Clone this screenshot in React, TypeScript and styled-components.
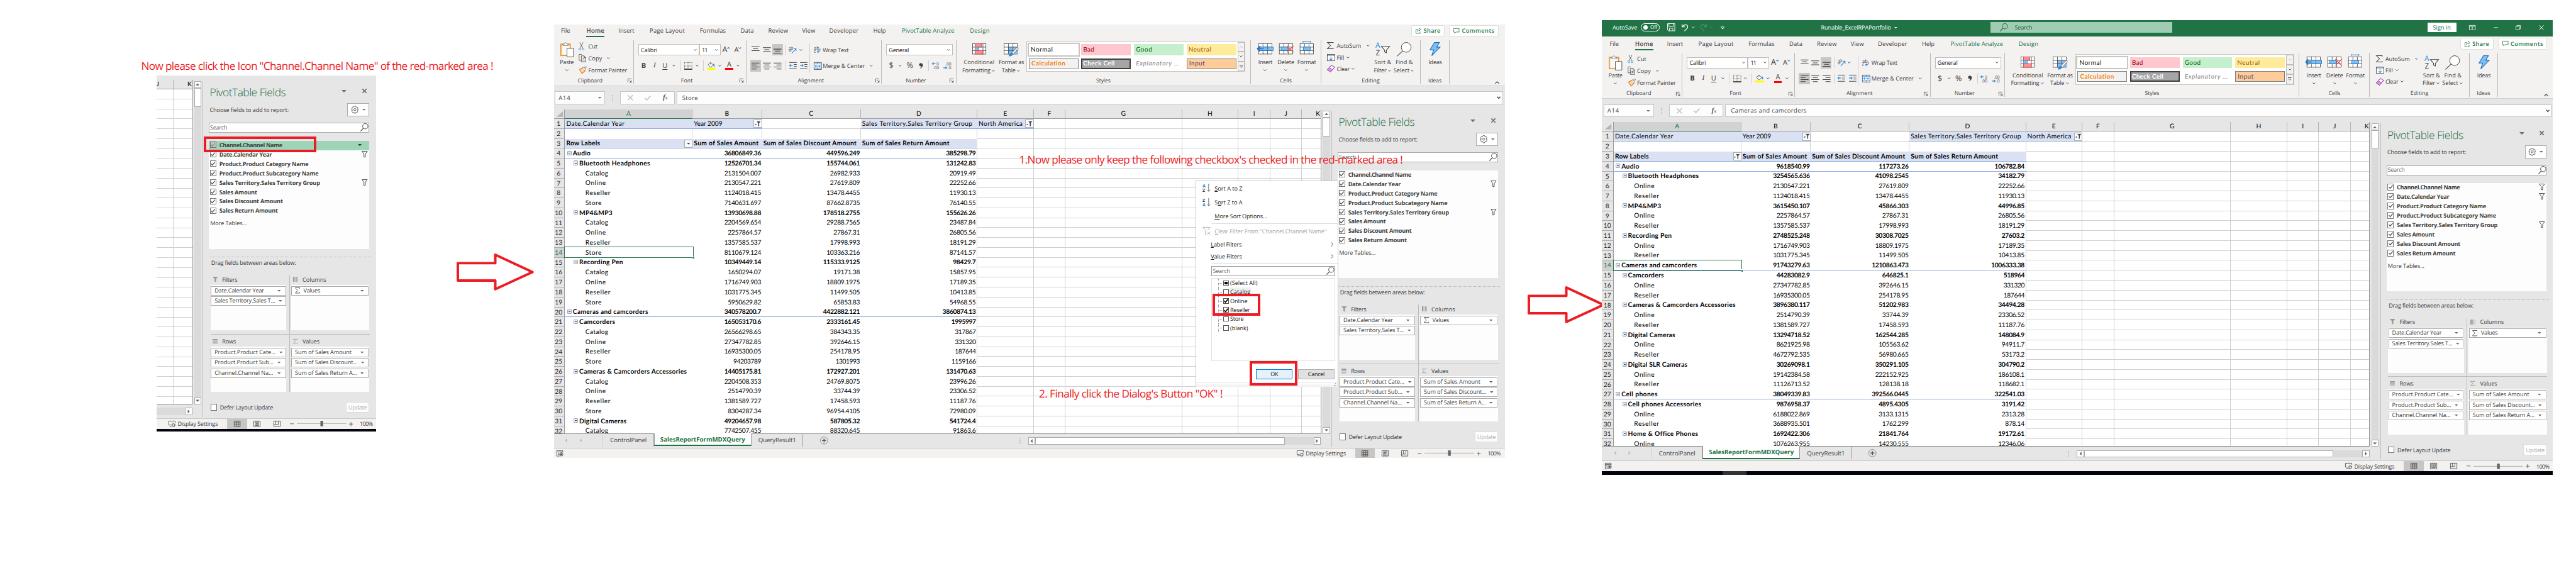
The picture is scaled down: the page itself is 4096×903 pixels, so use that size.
import React, { useLayoutEffect, useRef } from "react";
import styled, { createGlobalStyle, css } from "styled-components";

/* 1rem is ten design pixels of the 5192px wide board. */
const UNIT = 0.78891;
const r = (n: number) => `${n / 10}rem`;

const GREEN = "#217346";
const RED = "#ed1c24";
const CHROME = "#e6e6e6";
const PANEL = "#f3f2f1";
const INK = "#404040";
const BLUE = "#2b88d8";

const GlobalStyle = createGlobalStyle`
  html { font-size: ${UNIT * 10}px; }
  body { margin: 0; background: #fff; overflow: hidden; }
  *, *::before, *::after { box-sizing: border-box; }
  #root {
    font-family: "Open Sans", "Noto Sans", sans-serif;
    font-size: 1.16rem;
    color: ${INK};
    text-rendering: geometricPrecision;
  }
`;

/* ---------- text that is tracked to a given width ---------- */
const Tracked = styled.span`
  display: inline-block;
  white-space: pre;
`;

function T({ w, children }: { w: number; children: React.ReactNode }) {
  const ref = useRef<HTMLSpanElement>(null);
  useLayoutEffect(() => {
    const el = ref.current;
    if (!el) return;
    el.style.letterSpacing = "0px";
    const natural = el.getBoundingClientRect().width;
    const count = (el.textContent || "x").length;
    el.style.letterSpacing = `${(w * UNIT - natural) / count}px`;
  }, [w, children]);
  return <Tracked ref={ref}>{children}</Tracked>;
}

/* ---------- icons ---------- */
const Svg = styled.svg<{ $w: number; $h: number }>`
  display: block;
  flex: none;
  width: ${(p) => r(p.$w)};
  height: ${(p) => r(p.$h)};
  fill: none;
  stroke: ${INK};
  overflow: visible;
`;

type IconProps = { w: number; h: number; color?: string; children: React.ReactNode };
const Icon = ({ w, h, color, children }: IconProps) => (
  <Svg $w={w} $h={h} viewBox={`0 0 ${w} ${h}`} style={color ? { stroke: color } : undefined}>
    {children}
  </Svg>
);

const InlineCaret = styled.span<{ $gap?: number }>`
  display: inline-block;
  vertical-align: middle;
  margin: 0 ${r(2)} 0 ${(p) => r(p.$gap ?? 3)};
`;
const Caret = ({ color }: { color?: string }) => (
  <Icon w={6} h={4} color={color}><path d="M0.5 0.5L3 3L5.5 0.5" strokeWidth="1.2" /></Icon>
);
const TextCaret = ({ gap }: { gap?: number }) => <InlineCaret $gap={gap}><Caret /></InlineCaret>;
const Down = ({ w = 8, color = "#6a6a6a" }: { w?: number; color?: string }) => (
  <Icon w={w} h={w / 2} color="none"><path d={`M0 0H${w}L${w / 2} ${w / 2}Z`} fill={color} stroke="none" /></Icon>
);
const PasteIcon = () => (
  <Icon w={27} h={30}>
    <rect x="1" y="4" width="19" height="23" stroke="#e8912d" strokeWidth="2" fill="#fbe3c0" />
    <rect x="3.5" y="7" width="14" height="18" fill="#fafafa" stroke="none" />
    <path d="M5 7V4H8Q8 1 10.5 1T13 4H16V7Z" fill="#fff" stroke="#777" />
    <rect x="13.5" y="12.5" width="13" height="17" fill="#fff" stroke="#333" />
  </Icon>
);
const CutIcon = () => (
  <Icon w={12} h={17}>
    <path d="M2.5 0.5L8.5 12M9 0.5L3 12" />
    <circle cx="2.5" cy="14" r="2" stroke={BLUE} /><circle cx="9" cy="14" r="2" stroke={BLUE} />
  </Icon>
);
const CopyIcon = () => (
  <Icon w={15} h={16}>
    <path d="M6 12.5H1V0.5H6.5M5.5 3.5H11L14.5 7V15.5H5.5ZM11 3.5V7H14.5M8 9.5H12M8 12H12" />
  </Icon>
);
const PainterIcon = () => (
  <Icon w={17} h={16}>
    <path d="M2 7L8 3.5L13 9.5L7 15Z" fill="#fbd9a9" stroke="#e07b1a" strokeWidth="1.5" />
    <path d="M8 4L10.5 2L14 6.5L12 8.5M11.5 3L14.5 0.5L16 2L13.5 5" fill="#fff" stroke="#555" />
  </Icon>
);
const LauncherIcon = () => (
  <Icon w={8} h={8}><path d="M0.5 7.5V0.5H7.5M3 3L7 7M7.5 3.5V7.5H3.5" /></Icon>
);
const BordersIcon = () => (
  <Icon w={16} h={15}>
    <path d="M0.5 0.5H15.5M0.5 7.5H15.5M0.5 0V14M7.5 0V14M15.5 0V14" strokeDasharray="1.2 1.2" />
    <path d="M0 14H16" strokeWidth="2" stroke="#222" />
  </Icon>
);
const FillIcon = () => (
  <Icon w={17} h={17}>
    <path d="M2.5 6L7.5 1.5L13 7L7 11.5Z M7.5 1.5V6" fill="#fff" />
    <path d="M13 5Q15.5 7 14.5 10" stroke={BLUE} strokeWidth="2" />
    <rect x="0" y="12.5" width="17" height="4" fill="#ffff00" stroke="none" />
  </Icon>
);
const lines = (xs: number[][]) => xs.map(([x, y, l]) => `M${x} ${y}H${x + l}`).join("");
const AlignIcon = ({ kind }: { kind: "top" | "mid" | "bot" | "left" | "center" | "right" }) => {
  const d = {
    top: lines([[0, 1.5, 16], [3, 5.5, 10], [0, 9.5, 16]]),
    mid: lines([[0, 3.5, 16], [3, 7.5, 10], [0, 11.5, 16]]),
    bot: lines([[0, 6.5, 16], [3, 10.5, 10], [0, 14.5, 16]]),
    left: lines([[0, 1.5, 16], [0, 5.5, 10], [0, 9.5, 16], [0, 13.5, 10]]),
    center: lines([[0, 1.5, 16], [3, 5.5, 10], [0, 9.5, 16], [3, 13.5, 10]]),
    right: lines([[0, 1.5, 16], [6, 5.5, 10], [0, 9.5, 16], [6, 13.5, 10]]),
  }[kind];
  return <Icon w={16} h={15}><path d={d} strokeWidth="1.3" /></Icon>;
};
const OrientIcon = () => (
  <Icon w={17} h={16}>
    <text x="-1" y="9" transform="rotate(-45 5 7)" fontSize="10" fill={INK} stroke="none">ab</text>
    <path d="M6 15L15 6M15 10.5V5.5H10" stroke={BLUE} strokeWidth="1.3" />
  </Icon>
);
const IndentIcon = ({ out }: { out?: boolean }) => (
  <Icon w={15} h={14}>
    <path d="M0 0.5H15M9 4.5H15M9 8.5H15M0 13H15" strokeWidth="1.2" />
    <path d={out ? "M7 6.5H0.5M3 4L0.5 6.5L3 9" : "M0 6.5H6.5M4 4L6.5 6.5L4 9"} stroke={BLUE} strokeWidth="1.4" />
  </Icon>
);
const WrapIcon = () => (
  <Icon w={14} h={15}>
    <text x="0" y="7" fontSize="9.5" fill={INK} stroke="none">ab</text>
    <text x="0" y="14.5" fontSize="9.5" fill={INK} stroke="none">c</text>
    <path d="M12.5 6Q14 11.5 7 11.5M9.5 9L7 11.5L9.5 14" stroke={BLUE} strokeWidth="1.3" />
  </Icon>
);
const MergeIcon = () => (
  <Icon w={16} h={15}>
    <path d="M0.5 0.5H15.5V14.5H0.5ZM8 0.5V3.5M8 11.5V14.5" />
    <rect x="0.5" y="3.5" width="15" height="8" fill="#fff" stroke={BLUE} />
    <path d="M3 7.5H13M5 5.5L3 7.5L5 9.5M11 5.5L13 7.5L11 9.5" stroke={BLUE} strokeWidth="1.3" />
  </Icon>
);
const DecimalIcon = ({ more }: { more?: boolean }) => (
  <Icon w={17} h={16}>
    <text x={more ? 9 : 4} y="7" fontSize="8.5" fill={INK} stroke="none">{more ? "0" : ".00"}</text>
    <text x={more ? 2 : 9} y="15.5" fontSize="8.5" fill={INK} stroke="none">{more ? ".00" : ".0"}</text>
    <path d={more ? "M7 4H0.5M3 1.5L0.5 4L3 6.5" : "M0 12.5H7M4.5 10L7 12.5L4.5 15"} stroke={BLUE} strokeWidth="1.4" />
  </Icon>
);
const CondIcon = () => (
  <Icon w={28} h={22}>
    <rect x="0.5" y="0.5" width="27" height="21" fill="#fff" />
    <path d="M0 7.5H28M0 14.5H28M21.5 0V22" />
    <rect x="5.5" y="0.5" width="13" height="7" fill="#ff8f8f" stroke="#d13438" />
    <rect x="5.5" y="7.5" width="8" height="7" fill="#83bdee" stroke={BLUE} />
    <rect x="5.5" y="14.5" width="16" height="7" fill="#ff8f8f" stroke="#d13438" />
  </Icon>
);
const TableIcon = () => (
  <Icon w={30} h={27}>
    <rect x="0.5" y="0.5" width="27" height="21" fill="#fff" />
    <rect x="9" y="7" width="18.5" height="14.5" fill="#83bdee" stroke="none" />
    <path d="M0 7.5H28M0 14.5H28M9.5 0V22M18.5 0V22" />
    <path d="M28 7L16 19L19 22L29.5 10Z" fill="#fff" stroke="#555" />
    <path d="M17 18Q11 20 10 26Q17 27 19 21Z" fill={BLUE} stroke="none" />
  </Icon>
);
const CellsIcon = ({ kind }: { kind: "insert" | "delete" | "format" }) => (
  <Icon w={30} h={27}>
    <rect x="1.5" y="5.5" width="27" height="21" fill="#fff" />
    <path d="M1 12.5H29M1 19.5H29M10.5 5V27M19.5 5V27" />
    {kind === "insert" && (
      <>
        <rect x="3" y="12.5" width="28" height="7" fill="#83bdee" stroke="#0f6cbd" />
        <path d="M19.5 12V20" stroke="#0f6cbd" />
        <path d="M12 16H-1M4 10.5L-1 16L4 21.5" stroke="#0f6cbd" strokeWidth="1.6" />
      </>
    )}
    {kind === "delete" && (
      <>
        <rect x="5" y="12.5" width="14" height="7" fill="#83bdee" stroke="#0f6cbd" />
        <path d="M17 10L30 23M30 10L17 23" stroke="#f3534f" strokeWidth="1.8" />
      </>
    )}
    {kind === "format" && (
      <>
        <rect x="8" y="12.5" width="14" height="7" fill="#83bdee" stroke="#0f6cbd" />
        <path d="M7.5 0V3.5M22.5 0V3.5M7.5 1.7H22.5" stroke={BLUE} strokeWidth="1.3" />
      </>
    )}
  </Icon>
);
const SigmaIcon = ({ w = 12, h = 13, color }: { w?: number; h?: number; color?: string }) => (
  <Svg $w={w} $h={h} viewBox="0 0 12 13" preserveAspectRatio="none" style={color ? { stroke: color } : undefined}>
    <path d="M11.5 2.5V0.7H0.8L6.5 6.5L0.8 12.3H11.5V10.5" strokeWidth="1.2" />
  </Svg>
);
const FillDownIcon = () => (
  <Icon w={16} h={14}>
    <rect x="0.5" y="0.5" width="15" height="13" fill="#fff" /><path d="M0 2.5H16" />
    <path d="M8 4.5V12M5 9L8 12L11 9" stroke={BLUE} strokeWidth="1.3" />
  </Icon>
);
const EraserIcon = () => (
  <Icon w={16} h={15}>
    <path d="M9 0.7L15.3 5L7 14.3L0.7 10Z" fill="#fff" stroke="#a33fb5" strokeWidth="1.3" />
    <path d="M4.5 5.6L11 9.8L7 14.3L0.7 10Z" fill="#d59be0" stroke="#a33fb5" />
  </Icon>
);
const SortFilterIcon = () => (
  <Icon w={29} h={27}>
    <text x="0" y="12" fontSize="15" fill={BLUE} stroke="none">A</text>
    <text x="0.5" y="26" fontSize="15" fill={INK} stroke="none">Z</text>
    <path d="M12 8.5H28.5L22 16V21.5L18.5 19.5V16Z" strokeWidth="1.3" fill="#fff" />
  </Icon>
);
const FindIcon = () => (
  <Icon w={30} h={29}>
    <circle cx="19" cy="10.5" r="9.8" strokeWidth="1.2" fill="#fff" /><path d="M12 17.5L0.5 28.5" strokeWidth="1.3" />
  </Icon>
);
const BoltIcon = () => (
  <Icon w={22} h={28}><path d="M10 0.7H20L14.5 10H21.5L4.5 27.3L8.5 15.5H1Z" fill="#83bdee" stroke="#0f6cbd" strokeWidth="1.3" /></Icon>
);
const FunnelIcon = ({ solid }: { solid?: boolean }) =>
  solid ? (
    <Icon w={11} h={11}><path d="M0 0H11L7 4.5V11L4 9.5V4.5Z" fill="#9a9a9a" stroke="none" /></Icon>
  ) : (
    <Icon w={12} h={13}><path d="M0.7 0.7H11.5L7.5 6V12.3H4.7V6Z" strokeWidth="1.2" /></Icon>
  );
const LensIcon = ({ color }: { color?: string }) => (
  <Icon w={16} h={17} color={color}><circle cx="10" cy="6" r="5.4" strokeWidth="1.2" /><path d="M6 10L0.5 16" strokeWidth="1.4" /></Icon>
);
const GearIcon = () => (
  <Icon w={16} h={16}>
    <path d="M6.5 0.7H9.5L10.3 3L12.6 2.4L14.3 5L13 7L15.2 8L13 9.2L14.3 11.2L12.6 13.6L10.3 13L9.5 15.3H6.5L5.7 13L3.4 13.6L1.7 11.2L3 9.2L0.8 8L3 7L1.7 5L3.4 2.4L5.7 3Z" />
    <circle cx="8" cy="8" r="2.3" />
  </Icon>
);
const CrossIcon = ({ s = 10, color = "#555", sw = 2 }: { s?: number; color?: string; sw?: number }) => (
  <Icon w={s} h={s} color={color}><path d={`M0.5 0.5L${s - 0.5} ${s - 0.5}M${s - 0.5} 0.5L0.5 ${s - 0.5}`} strokeWidth={sw} /></Icon>
);
const CheckIcon = ({ color = "#555", sw = 1.7 }: { color?: string; sw?: number }) => (
  <Icon w={9} h={8} color={color}><path d="M0.5 4L3.3 7L8.5 0.8" strokeWidth={sw} /></Icon>
);

/* ---------- ribbon ---------- */
const Titlebar = styled.div`
  display: flex;
  align-items: center;
  height: ${r(33)};
  padding-bottom: ${r(2)};
  background: ${GREEN};
  color: #fff;
`;
const TitleItem = styled.div<{ $gap: number; $w?: number }>`
  display: flex;
  align-items: center;
  justify-content: flex-start;
  flex: none;
  margin-left: ${(p) => r(p.$gap)};
  ${(p) => p.$w && css`width: ${r(p.$w)};`}
`;
const Toggle = styled(TitleItem)`
  height: ${r(16)};
  border: 1px solid #fff;
  border-radius: ${r(8)};
  padding-left: ${r(4)};
  gap: ${r(5)};
  font-size: ${r(10.5)};
`;
const Knob = styled.span`
  width: ${r(9)};
  height: ${r(9)};
  border-radius: 50%;
  background: #fff;
`;
const SearchPill = styled(TitleItem)`
  height: ${r(22)};
  padding-left: ${r(19)};
  gap: ${r(14)};
  background: #9fcdb3;
  color: #1c5e3a;
`;
const SignIn = styled(TitleItem)`
  height: ${r(19)};
  justify-content: center;
  background: #fff;
  color: ${GREEN};
  border-radius: 1px;
`;

const TabBar = styled.div<{ $cut: boolean }>`
  display: flex;
  height: ${(p) => r(p.$cut ? 26 : 29)};
  padding-left: ${r(16.3)};
  background: ${PANEL};
`;
const Tab = styled.div<{ $lead: number; $on?: boolean; $green?: boolean }>`
  margin-left: ${(p) => r(p.$lead)};
  display: flex;
  align-items: flex-end;
  line-height: ${r(18.6)};
  font-size: ${r(12)};
  color: ${(p) => (p.$green ? GREEN : INK)};
  border-bottom: ${r(3)} solid ${(p) => (p.$on ? GREEN : "transparent")};
  height: calc(100% - ${r(1)});
  ${(p) => p.$on && css`-webkit-text-stroke: 0.3px ${INK};`}
`;
const TabTools = styled.div`
  display: flex;
  align-items: flex-end;
  margin-left: auto;
  padding: 0 ${r(13)} ${r(2.3)} 0;
  gap: ${r(9)};
`;
const TabTool = styled.div<{ $w: number }>`
  display: flex;
  align-items: center;
  gap: ${r(5)};
  width: ${(p) => r(p.$w)};
  height: ${r(23.4)};
  padding-left: ${r(7.5)};
  border: 1px solid #e1dfdd;
  border-radius: ${r(3)};
  background: #fff;
  color: ${GREEN};
  font-weight: 600;
`;

const RibbonBar = styled.div`
  display: flex;
  height: ${r(97.6)};
  padding-top: ${r(5)};
  background: ${PANEL};
  border-bottom: 1px solid #d0d0d0;
`;
const GroupBox = styled.div<{ $w: number }>`
  display: flex;
  flex-direction: column;
  flex: none;
  width: ${(p) => r(p.$w)};
  height: ${r(88)};
  border-right: 1px solid #bdbbb9;
`;
const GroupBody = styled.div`
  display: flex;
  height: ${r(78)};
`;
const GroupLabel = styled.div`
  display: flex;
  align-items: center;
  height: ${r(12)};
  line-height: ${r(12)};
  font-size: ${r(11)};
`;
const LabelText = styled.span`
  flex: 1;
  text-align: center;
`;
const Launcher = styled.span`
  width: ${r(12)};
`;
function Group(p: { w: number; label: string; lw: number; launch?: boolean; children: React.ReactNode }) {
  return (
    <GroupBox $w={p.w}>
      <GroupBody>{p.children}</GroupBody>
      <GroupLabel>
        <LabelText><T w={p.lw}>{p.label}</T></LabelText>
        {p.launch && <Launcher><LauncherIcon /></Launcher>}
      </GroupLabel>
    </GroupBox>
  );
}

const BigButton = styled.div<{ $w: number; $lead?: number }>`
  width: ${(p) => r(p.$w)};
  margin-left: ${(p) => r(p.$lead || 0)};
  flex: none;
  display: flex;
  flex-direction: column;
  align-items: center;
  line-height: ${r(16)};
  white-space: nowrap;
`;
const BigArt = styled.div<{ $top?: number }>`
  height: ${r(37)};
  padding-top: ${(p) => r(p.$top ?? 4)};
`;
const CaretLine = styled.div`
  height: ${r(15)};
  display: flex;
  align-items: center;
`;
const SmallList = styled.div<{ $lead: number; $pitch: number; $w: number }>`
  display: grid;
  grid-auto-rows: ${(p) => r(p.$pitch)};
  align-items: center;
  margin-left: ${(p) => r(p.$lead)};
  width: ${(p) => r(p.$w)};
  flex: none;
`;
const SmallButton = styled.div`
  display: grid;
  grid-template-columns: ${r(19)} auto auto;
  justify-content: start;
  align-items: center;
  white-space: nowrap;
`;
const ToolRows = styled.div<{ $lead: number }>`
  display: flex;
  flex-direction: column;
  gap: ${r(9)};
  padding: ${r(8)} 0 0 ${(p) => r(p.$lead)};
`;
const ToolRow = styled.div<{ $cols: number[] }>`
  display: grid;
  grid-template-columns: ${(p) => p.$cols.map((c) => r(c)).join(" ")};
  height: ${r(23)};
`;
const Tool = styled.div<{ $on?: boolean }>`
  display: flex;
  align-items: center;
  justify-content: center;
  background: ${(p) => (p.$on ? "#c8c6c4" : "transparent")};
`;
const Letter = styled(Tool)<{ $size?: number; $bold?: boolean; $italic?: boolean; $line?: boolean }>`
  font-size: ${(p) => r(p.$size || 14)};
  font-weight: ${(p) => (p.$bold ? 700 : 400)};
  font-style: ${(p) => (p.$italic ? "italic" : "normal")};
  font-family: ${(p) => (p.$italic ? '"Liberation Serif", serif' : "inherit")};
  text-decoration: ${(p) => (p.$line ? "underline" : "none")};
  text-underline-offset: ${r(2)};
  line-height: 1;
`;
const FontColour = styled.span`
  border-bottom: ${r(4)} solid #ff0000;
  padding: 0 ${r(3.5)};
  line-height: ${r(13)};
`;
const Divider = styled.span<{ $h?: number; $top?: number }>`
  flex: none;
  width: 1px;
  height: ${(p) => r(p.$h || 21)};
  margin-top: ${(p) => r(p.$top || 0)};
  background: #d0cecc;
`;
const Combo = styled.div`
  display: flex;
  align-items: center;
  justify-content: space-between;
  padding: 0 ${r(4)};
  background: #fff;
  border: 1px solid #c0bebc;
  color: #222;
`;
const WideTool = styled.div`
  display: grid;
  grid-template-columns: ${r(18.5)} auto auto;
  justify-content: start;
  align-items: center;
  height: ${r(23)};
  white-space: nowrap;
`;

const Gallery = styled.div`
  display: flex;
  width: ${r(441)};
  height: ${r(61.7)};
  margin-top: ${r(2.3)};
  background: #fff;
  border: 1px solid #c8c6c4;
`;
const Swatches = styled.div`
  display: grid;
  flex: 1;
  grid-template-columns: repeat(4, ${r(100)});
  grid-auto-rows: ${r(22)};
  gap: ${r(6)};
  padding: ${r(4.8)} 0 0 ${r(3)};
`;
const Swatch = styled.div<{ $bg: string; $fg: string; $kind?: string }>`
  display: flex;
  align-items: center;
  padding-left: ${r(4)};
  font-size: ${r(12.6)};
  font-family: Lato, "Open Sans", sans-serif;
  background: ${(p) => p.$bg};
  color: ${(p) => p.$fg};
  ${(p) => p.$kind === "picked" && css`box-shadow: 0 0 0 ${r(2.6)} #c8c6c4;`}
  ${(p) => p.$kind === "boxed" && css`border: 1px solid #7f7f7f;`}
  ${(p) => p.$kind === "check" && css`border: ${r(3)} double #3f3f3f; font-weight: 700; padding-left: ${r(1)};`}
  ${(p) => p.$kind === "calc" && css`border: 1px solid #7f7f7f; font-weight: 700;`}
  ${(p) => p.$kind === "note" && css`font-style: italic;`}
`;
const GalleryScroll = styled.div`
  display: grid;
  grid-template-rows: 1fr 1fr 1fr;
  width: ${r(15)};
`;
const GalleryStep = styled.div`
  display: flex;
  flex-direction: column;
  align-items: center;
  justify-content: center;
  border: 1px solid #c0bebc;
  background: ${PANEL};
`;
const Collapse = styled.div`
  margin: ${r(82)} ${r(11)} 0 auto;
`;

const TABS: [string, number, number, string?][] = [
  ["File", 0, 18.6], ["Home", 32.8, 36.5, "on"], ["Insert", 28, 32], ["Page Layout", 31, 71],
  ["Formulas", 30, 52.4], ["Data", 29.6, 27], ["Review", 29, 40], ["View", 28, 27],
  ["Developer", 28, 59], ["Help", 29.6, 25.4], ["PivotTable Analyze", 32.4, 106, "green"], ["Design", 31, 40, "green"],
];

function TitleStrip() {
  return (
    <Titlebar>
      <TitleItem $gap={22} $w={50}><T w={50}>AutoSave</T></TitleItem>
      <Toggle $gap={7} $w={38}><Knob /><T w={14}>Off</T></Toggle>
      <TitleItem $gap={15} $w={16}>
        <Icon w={16} h={16} color="#fff"><path d="M0.7 0.7H15.3V15.3H2.5L0.7 13.5ZM3.5 1V6.5H12.5V1M4.5 15V10H11.5V15" strokeWidth="1.2" /></Icon>
      </TitleItem>
      <TitleItem $gap={14} $w={15}>
        <Icon w={14} h={15} color="#fff"><path d="M1 0.5V6H6.5M1.5 5.5Q5 1 9.5 2Q13.5 4 11.5 8.5L5.5 14.5" strokeWidth="1.5" /></Icon>
      </TitleItem>
      <TitleItem $gap={5}><Caret color="#fff" /></TitleItem>
      <TitleItem $gap={11} $w={15}>
        <Icon w={14} h={15} color="#4f9470"><path d="M13 0.5V6H7.5M12.5 5.5Q9 1 4.5 2Q0.5 4 2.5 8.5L8.5 14.5" strokeWidth="1.5" /></Icon>
      </TitleItem>
      <TitleItem $gap={5}><Caret color="#4f9470" /></TitleItem>
      <TitleItem $gap={15}>
        <Icon w={8} h={7} color="#fff"><path d="M0.5 0.7H7.5M1 3L4 6L7 3" strokeWidth="1.3" /></Icon>
      </TitleItem>
      <TitleItem $gap={194.5} $w={141}><T w={141}>Runable_ExcelRPAPortfolio</T></TitleItem>
      <TitleItem $gap={6.5}><Down w={6} color="#fff" /></TitleItem>
      <SearchPill $gap={188} $w={366}><LensIcon color="#1c5e3a" /><T w={35}>Search</T></SearchPill>
      <SignIn $gap={515} $w={58}><T w={36}>Sign in</T></SignIn>
      <TitleItem $gap={26}>
        <Icon w={13} h={10} color="#fff"><path d="M0.5 0.5H12.5V9.5H0.5ZM0.5 2.5H12.5M6.5 8.5V4.5M4.5 6L6.5 4.2L8.5 6" /></Icon>
      </TitleItem>
      <TitleItem $gap={36}><Icon w={9} h={2} color="#fff"><path d="M0 1H9" /></Icon></TitleItem>
      <TitleItem $gap={36}>
        <Icon w={10} h={10} color="#fff"><path d="M0.5 2.5H7.5V9.5H0.5ZM2.5 2.5V0.5H9.5V7.5H7.5" /></Icon>
      </TitleItem>
      <TitleItem $gap={36}><CrossIcon color="#fff" sw={1.2} /></TitleItem>
    </Titlebar>
  );
}

function Ribbon({ cut }: { cut: boolean }) {
  return (
    <>
      <TabBar $cut={cut}>
        {TABS.map(([name, lead, w, mode]) => (
          <Tab key={name} $lead={lead} $on={mode === "on"} $green={mode === "green"}><T w={w}>{name}</T></Tab>
        ))}
        <TabTools>
          <TabTool $w={67}>
            <Icon w={11} h={12} color={GREEN}><path d="M5 3.5H0.5V11.5H9V8M3 8.5Q3.5 4.5 7 4.5V6.5L10.5 3.5L7 0.5V2.5" /></Icon>
            <T w={34}>Share</T>
          </TabTool>
          <TabTool $w={99.6}>
            <Icon w={12} h={11} color={GREEN}><path d="M0.5 0.5H11.5V7.5H5L2.5 10V7.5H0.5Z" /></Icon>
            <T w={66}>Comments</T>
          </TabTool>
        </TabTools>
      </TabBar>
      <RibbonBar>
        <Group w={163.4} label="Clipboard" lw={50} launch>
          <BigButton $w={28} $lead={14}>
            <BigArt><PasteIcon /></BigArt>
            <T w={28}>Paste</T>
            <CaretLine><Caret /></CaretLine>
          </BigButton>
          <SmallList $lead={10.5} $pitch={24} $w={105}>
            <SmallButton><CutIcon /><T w={18.6}>Cut</T></SmallButton>
            <SmallButton><CopyIcon /><T w={27.8}>Copy</T><TextCaret gap={10} /></SmallButton>
            <SmallButton><PainterIcon /><T w={78}>Format Painter</T></SmallButton>
          </SmallList>
        </Group>
        <Group w={226.5} label="Font" lw={23.6} launch>
          <ToolRows $lead={8.6}>
            <ToolRow $cols={[123, 43, 23, 24]}>
              <Combo><T w={33}>Calibri</T><Caret /></Combo>
              <Combo><T w={11}>11</T><Caret /></Combo>
              <Letter $size={16}>A<Icon w={6} h={12} color={BLUE}><path d="M0.5 3L3 0.5L5.5 3" strokeWidth="1.3" /></Icon></Letter>
              <Letter $size={14}>A<Icon w={6} h={12} color={BLUE}><path d="M0.5 0.5L3 3L5.5 0.5" strokeWidth="1.3" /></Icon></Letter>
            </ToolRow>
            <ToolRow $cols={[22, 22, 20, 16, 11, 20, 15, 10, 22, 12, 27, 9]}>
              <Letter $bold>B</Letter><Letter $italic>I</Letter><Letter $line>U</Letter><Tool><Caret /></Tool>
              <Tool><Divider /></Tool><Tool><BordersIcon /></Tool><Tool><Caret /></Tool><Tool><Divider /></Tool>
              <Tool><FillIcon /></Tool><Tool><Caret /></Tool>
              <Letter $size={14}><FontColour>A</FontColour></Letter><Tool><Caret /></Tool>
            </ToolRow>
          </ToolRows>
        </Group>
        <Group w={273.5} label="Alignment" lw={53} launch>
          <ToolRows $lead={8}>
            <ToolRow $cols={[22, 22, 22, 9, 22, 9]}>
              <Tool><AlignIcon kind="top" /></Tool><Tool><AlignIcon kind="mid" /></Tool><Tool $on><AlignIcon kind="bot" /></Tool>
              <Tool><Divider /></Tool><Tool><OrientIcon /></Tool><Tool><Caret /></Tool>
            </ToolRow>
            <ToolRow $cols={[22, 22, 22, 9, 22, 22]}>
              <Tool $on><AlignIcon kind="left" /></Tool><Tool><AlignIcon kind="center" /></Tool><Tool><AlignIcon kind="right" /></Tool>
              <Tool><Divider /></Tool><Tool><IndentIcon out /></Tool><Tool><IndentIcon /></Tool>
            </ToolRow>
          </ToolRows>
          <Divider $h={59} $top={6} />
          <ToolRows $lead={7.5}>
            <WideTool><WrapIcon /><T w={52}>Wrap Text</T></WideTool>
            <WideTool><MergeIcon /><T w={85}>Merge &amp; Center</T><TextCaret gap={10} /></WideTool>
          </ToolRows>
        </Group>
        <Group w={150} label="Number" lw={40.7} launch>
          <ToolRows $lead={8.6}>
            <ToolRow $cols={[133.6]}><Combo><T w={40}>General</T><Caret /></Combo></ToolRow>
            <ToolRow $cols={[20, 17, 21, 25, 5, 25, 20]}>
              <Letter $size={16}>$</Letter><Tool><Caret /></Tool><Letter $size={16}>%</Letter>
              <Tool><Icon w={9} h={12}><path d="M4.5 0.5A3.2 3.2 0 1 0 5 6.5Q4.5 9 2 11.5Q8.5 9 8 3.5Q7.5 0.5 4.5 0.5Z" fill={INK} stroke="none" /></Icon></Tool>
              <Tool><Divider /></Tool><Tool><DecimalIcon more /></Tool><Tool><DecimalIcon /></Tool>
            </ToolRow>
          </ToolRows>
        </Group>
        <Group w={593.5} label="Styles" lw={28.7}>
          <BigButton $w={68} $lead={11.6}>
            <BigArt $top={7}><CondIcon /></BigArt>
            <T w={61.4}>Conditional</T>
            <span><T w={57}>Formatting</T><TextCaret /></span>
          </BigButton>
          <BigButton $w={62}>
            <BigArt $top={7}><TableIcon /></BigArt>
            <T w={51}>Format as</T>
            <span><T w={28}>Table</T><TextCaret /></span>
          </BigButton>
          <Gallery>
            <Swatches>
              <Swatch $bg="#fff" $fg="#000" $kind="picked"><T w={45}>Normal</T></Swatch>
              <Swatch $bg="#ffc7ce" $fg="#9c0006"><T w={22}>Bad</T></Swatch>
              <Swatch $bg="#c6efce" $fg="#006100"><T w={33}>Good</T></Swatch>
              <Swatch $bg="#ffeb9c" $fg="#9c5700"><T w={46}>Neutral</T></Swatch>
              <Swatch $bg="#f2f2f2" $fg="#fa7d00" $kind="calc"><T w={69}>Calculation</T></Swatch>
              <Swatch $bg="#a5a5a5" $fg="#fff" $kind="check"><T w={64}>Check Cell</T></Swatch>
              <Swatch $bg="#fff" $fg="#7f7f7f" $kind="note"><T w={88}>Explanatory ...</T></Swatch>
              <Swatch $bg="#ffcc99" $fg="#3f3f76" $kind="boxed"><T w={32}>Input</T></Swatch>
            </Swatches>
            <GalleryScroll>
              <GalleryStep><Icon w={6} h={4} color="#b5b3b1"><path d="M0.5 3.5L3 1L5.5 3.5" /></Icon></GalleryStep>
              <GalleryStep><Caret /></GalleryStep>
              <GalleryStep><Icon w={7} h={7}><path d="M0 0.7H7M1 3L3.5 5.5L6 3" strokeWidth="1.2" /></Icon></GalleryStep>
            </GalleryScroll>
          </Gallery>
        </Group>
        <Group w={142} label="Cells" lw={23.6}>
          <BigButton $w={42} $lead={8}><BigArt $top={2}><CellsIcon kind="insert" /></BigArt><T w={28}>Insert</T><CaretLine><Caret /></CaretLine></BigButton>
          <BigButton $w={41}><BigArt $top={2}><CellsIcon kind="delete" /></BigArt><T w={34}>Delete</T><CaretLine><Caret /></CaretLine></BigButton>
          <BigButton $w={43}><BigArt $top={2}><CellsIcon kind="format" /></BigArt><T w={37.6}>Format</T><CaretLine><Caret /></CaretLine></BigButton>
        </Group>
        <Group w={200.4} label="Editing" lw={36}>
          <SmallList $lead={12} $pitch={23} $w={91}>
            <SmallButton><SigmaIcon w={13} h={14} /><T w={49}>AutoSum</T><TextCaret gap={11} /></SmallButton>
            <SmallButton><FillDownIcon /><T w={15}>Fill</T><TextCaret gap={5} /></SmallButton>
            <SmallButton><EraserIcon /><T w={26}>Clear</T><TextCaret gap={4} /></SmallButton>
          </SmallList>
          <BigButton $w={42}><BigArt><SortFilterIcon /></BigArt><T w={34}>Sort &amp;</T><span><T w={25.5}>Filter</T><TextCaret /></span></BigButton>
          <BigButton $w={44}><BigArt><FindIcon /></BigArt><T w={35}>Find &amp;</T><span><T w={32}>Select</T><TextCaret /></span></BigButton>
        </Group>
        <Group w={58} label="Ideas" lw={26.8}>
          <BigButton $w={58}><BigArt><BoltIcon /></BigArt><T w={26.8}>Ideas</T></BigButton>
        </Group>
        <Collapse><Icon w={9} h={6}><path d="M0.5 5L4.5 1L8.5 5" strokeWidth="1.3" /></Icon></Collapse>
      </RibbonBar>
    </>
  );
}

/* ---------- formula bar ---------- */
const FormulaBar = styled.div`
  display: flex;
  align-items: flex-start;
  height: ${r(46.4)};
  padding: ${r(10.7)} ${r(4)} 0 ${r(4)};
  background: ${CHROME};
`;
const FieldBox = styled.div<{ $w?: number; $lead?: number }>`
  display: flex;
  align-items: center;
  justify-content: space-between;
  ${(p) => (p.$w ? css`width: ${r(p.$w)};` : css`flex: 1;`)}
  height: ${r(25.6)};
  margin-left: ${(p) => r(p.$lead || 0)};
  padding: 0 ${r(6.5)};
  background: #fdfdfd;
  border: 1px solid #c6c6c6;
  font-size: ${r(12)};
`;
const Grip = () => (
  <Icon w={2} h={11}><path d="M1 0V2M1 4.5V6.5M1 9V11" strokeWidth="1.5" stroke="#9b9b9b" /></Icon>
);
const GripSlot = styled.div<{ $w: number }>`
  display: flex;
  justify-content: center;
  align-items: center;
  width: ${(p) => r(p.$w)};
  height: ${r(25.6)};
`;
const FxBox = styled(FieldBox)`
  padding: 0 ${r(13)} 0 ${r(14)};
`;
const FxMark = styled.span`
  font: italic 700 ${r(14)} "Liberation Serif", serif;
  color: #555;
`;
const Small = styled.span`
  font-size: 0.7em;
`;
const InputBox = styled(FieldBox)`
  padding: 0 ${r(3)} 0 ${r(10)};
`;

/* ---------- sheet ---------- */
const SheetBox = styled.div`
  display: flex;
  flex-direction: column;
  flex: none;
  height: ${r(654.6)};
  overflow: hidden;
  background: #fff;
  border-right: 1px solid #9b9b9b;
  border-bottom: 1px solid #8f8f8f;
  font-family: Lato, "Open Sans", sans-serif;
  font-size: ${r(13)};
  color: #000;
`;
const HeadRow = styled.div`
  display: flex;
  flex: none;
  height: ${r(19.6)};
  background: ${CHROME};
`;
const HeadCell = styled.div<{ $w: number; $on?: boolean; $side?: string }>`
  flex: none;
  width: ${(p) => r(p.$w)};
  text-align: ${(p) => p.$side || "center"};
  line-height: ${r(19)};
  border-right: 1px solid #b4b4b4;
  border-bottom: 1px solid #9b9b9b;
  &:last-child { border-right: 0; padding-right: ${r(1)}; }
  ${(p) => p.$on && css`background: #d2d2d2; color: ${GREEN}; border-bottom: ${r(2.5)} solid ${GREEN};`}
`;
const Corner = styled.div`
  flex: none;
  display: flex;
  justify-content: flex-end;
  align-items: flex-end;
  width: ${r(24.6)};
  padding: 0 ${r(3)} ${r(3)} 0;
  border-right: 1px solid #9b9b9b;
  border-bottom: 1px solid #9b9b9b;
`;
const GridRow = styled.div`
  display: flex;
  flex: none;
  height: ${r(20)};
`;
const RowHead = styled.div<{ $on: boolean }>`
  flex: none;
  width: ${r(24.6)};
  text-align: center;
  line-height: ${r(21)};
  background: ${(p) => (p.$on ? "#d2d2d2" : CHROME)};
  color: ${(p) => (p.$on ? GREEN : "#222")};
  border-right: 1px solid #9b9b9b;
  border-bottom: 1px solid #ababab;
`;
const Cell = styled.div<{ $w: number; $fill?: boolean; $line?: string; $edge?: boolean; $num?: boolean; $bold?: boolean; $pad?: number }>`
  position: relative;
  flex: none;
  display: flex;
  align-items: center;
  justify-content: ${(p) => (p.$num ? "flex-end" : "flex-start")};
  width: ${(p) => r(p.$w)};
  padding: ${r(1)} ${(p) => (p.$num ? r(2) : "0")} 0 ${(p) => r(p.$pad ?? 2.6)};
  font-weight: ${(p) => (p.$bold ? 700 : 400)};
  background: ${(p) => (p.$fill ? "#d9e1f2" : "#fff")};
  border-bottom: 1px solid ${(p) => p.$line || "transparent"};
  border-right: ${(p) => (p.$edge ? "1px solid #d0d0d0" : "0")};
  white-space: nowrap;
`;
const Selection = styled.div`
  position: absolute;
  inset: ${r(-2)} ${r(-2)} ${r(-2)} ${r(-1.5)};
  border: ${r(2.4)} solid ${GREEN};
  z-index: 2;
  &::after {
    content: "";
    position: absolute;
    right: ${r(-4)};
    bottom: ${r(-4)};
    width: ${r(6)};
    height: ${r(6)};
    background: ${GREEN};
    border: 1px solid #fff;
  }
`;
const FilterButton = styled.div`
  display: flex;
  align-items: center;
  justify-content: center;
  width: ${r(16.7)};
  height: ${r(17)};
  margin-left: auto;
  background: #fbfbfb;
  border: 1px solid #a8adb8;
`;
const FilterMark = () => (
  <Icon w={12} h={10}>
    <path d="M4 0H12L9 3.5V9.5H7V3.5Z" fill="#444" stroke="none" />
    <path d="M0 5.5H4L2 8Z" fill="#444" stroke="none" />
  </Icon>
);
const Expander = styled.span`
  display: flex;
  align-items: center;
  justify-content: center;
  width: ${r(9)};
  height: ${r(9)};
  margin-right: ${r(2.4)};
  margin-top: ${r(-2)};
  border: 1px solid #9aa7bd;
  border-radius: 1px;
  background: #e3e9f3;
  &::after { content: ""; width: 60%; height: 1px; background: #2f4a7a; }
`;

const COLS: [string, number][] = [
  ["A", 257], ["B", 140], ["C", 199], ["D", 235], ["E", 113.6], ["F", 64],
  ["G", 235], ["H", 114], ["I", 64], ["J", 64], ["K", 37.4],
];
const LABEL_W: Record<string, number> = {
  Audio: 36, "Bluetooth Headphones": 143, Catalog: 46.5, Online: 41.5, Reseller: 51, Store: 33, "MP4&MP3": 66.8,
  "Recording Pen": 88.5, "Cameras and camcorders": 152, Camcorders: 72.4, "Cameras & Camcorders Accessories": 217,
  "Digital Cameras": 95.3, "Digital SLR Cameras": 120, "Cell phones": 73, "Cell phones Accessories": 148, "Home & Office Phones": 141,
};
type DataRow = [number, string, string, string, string];
const BEFORE: DataRow[] = [
  [0, "Audio", "36806849.36", "449596.249", "385298.79"],
  [1, "Bluetooth Headphones", "12526701.34", "155744.061", "131242.83"],
  [2, "Catalog", "2131504.007", "26982.933", "20919.49"],
  [2, "Online", "2130547.221", "27619.809", "22252.66"],
  [2, "Reseller", "1124018.415", "13478.4455", "11930.13"],
  [2, "Store", "7140631.697", "87662.8735", "76140.55"],
  [1, "MP4&MP3", "13930698.88", "178518.2755", "155626.26"],
  [2, "Catalog", "2204569.654", "29288.7565", "23487.84"],
  [2, "Online", "2257864.57", "27867.31", "26805.56"],
  [2, "Reseller", "1357585.537", "17998.993", "18191.29"],
  [2, "Store", "8110679.124", "103363.216", "87141.57"],
  [1, "Recording Pen", "10349449.14", "115333.9125", "98429.7"],
  [2, "Catalog", "1650294.07", "19171.38", "15857.95"],
  [2, "Online", "1716749.903", "18809.1975", "17189.35"],
  [2, "Reseller", "1031775.345", "11499.505", "10413.85"],
  [2, "Store", "5950629.82", "65853.83", "54968.55"],
  [0, "Cameras and camcorders", "340578200.7", "4422882.121", "3860874.13"],
  [1, "Camcorders", "165053170.6", "2333161.45", "1995997"],
  [2, "Catalog", "26566298.65", "384343.35", "317867"],
  [2, "Online", "27347782.85", "392646.15", "331320"],
  [2, "Reseller", "16935300.05", "254178.95", "187644"],
  [2, "Store", "94203789", "1301993", "1159166"],
  [1, "Cameras & Camcorders Accessories", "14405175.81", "172927.201", "131470.63"],
  [2, "Catalog", "2204508.353", "24769.8075", "23996.26"],
  [2, "Online", "2514790.39", "33744.39", "23306.52"],
  [2, "Reseller", "1381589.727", "17458.593", "11187.76"],
  [2, "Store", "8304287.34", "96954.4105", "72980.09"],
  [1, "Digital Cameras", "49204657.98", "587805.32", "541724.4"],
  [2, "Catalog", "7742507.455", "88320.645", "91863.6"],
];
const AFTER: DataRow[] = [
  [0, "Audio", "9618540.99", "117273.26", "106782.84"],
  [1, "Bluetooth Headphones", "3254565.636", "41098.2545", "34182.79"],
  [2, "Online", "2130547.221", "27619.809", "22252.66"],
  [2, "Reseller", "1124018.415", "13478.4455", "11930.13"],
  [1, "MP4&MP3", "3615450.107", "45866.303", "44996.85"],
  [2, "Online", "2257864.57", "27867.31", "26805.56"],
  [2, "Reseller", "1357585.537", "17998.993", "18191.29"],
  [1, "Recording Pen", "2748525.248", "30308.7025", "27603.2"],
  [2, "Online", "1716749.903", "18809.1975", "17189.35"],
  [2, "Reseller", "1031775.345", "11499.505", "10413.85"],
  [0, "Cameras and camcorders", "91743279.63", "1210863.473", "1006333.38"],
  [1, "Camcorders", "44283082.9", "646825.1", "518964"],
  [2, "Online", "27347782.85", "392646.15", "331320"],
  [2, "Reseller", "16935300.05", "254178.95", "187644"],
  [1, "Cameras & Camcorders Accessories", "3896380.117", "51202.983", "34494.28"],
  [2, "Online", "2514790.39", "33744.39", "23306.52"],
  [2, "Reseller", "1381589.727", "17458.593", "11187.76"],
  [1, "Digital Cameras", "13294718.52", "162544.285", "148084.9"],
  [2, "Online", "8621925.98", "105563.62", "94911.7"],
  [2, "Reseller", "4672792.535", "56980.665", "53173.2"],
  [1, "Digital SLR Cameras", "30269098.1", "350291.105", "304790.2"],
  [2, "Online", "19142384.58", "222152.925", "186108.1"],
  [2, "Reseller", "11126713.52", "128138.18", "118682.1"],
  [0, "Cell phones", "38049339.83", "392566.0445", "322541.03"],
  [1, "Cell phones Accessories", "9876958.37", "4895.4305", "3191.42"],
  [2, "Online", "6188022.869", "3133.1315", "2313.28"],
  [2, "Reseller", "3688935.501", "1762.299", "878.14"],
  [1, "Home & Office Phones", "1692422.306", "21841.764", "19172.61"],
  [2, "Online", "1076263.955", "14230.555", "12346.06"],
];
const LINE = "#d0d0d0";
const ACCENT = "#8ea9db";
const numberWidth = (s: string) => s.replace(".", "").length * 7 + (s.includes(".") ? 4 : 0);

const BlankCells = ({ from }: { from: number }) => (
  <>{COLS.slice(from).map(([c, w], i, all) => <Cell key={c} $w={w} $line={LINE} $edge={i < all.length - 1} />)}</>
);

function Sheet({ rows, filtered }: { rows: DataRow[]; filtered: boolean }) {
  return (
    <SheetBox>
      <HeadRow>
        <Corner><Icon w={13} h={11}><path d="M13 0V11H0Z" fill="#b4b4b4" stroke="none" /></Icon></Corner>
        {COLS.map(([c, w]) => <HeadCell key={c} $w={w} $on={c === "A"} $side={c === "K" ? "right" : undefined}>{c}</HeadCell>)}
      </HeadRow>
      <GridRow>
        <RowHead $on={false}>1</RowHead>
        <Cell $w={257} $fill $line={ACCENT}><T w={117.6}>Date.Calendar Year</T></Cell>
        <Cell $w={140} $fill $line={ACCENT}><T w={57.5}>Year 2009</T><FilterButton><FilterMark /></FilterButton></Cell>
        <Cell $w={199} $line={LINE} />
        <Cell $w={235} $fill $line={ACCENT}><T w={222.8}>Sales Territory.Sales Territory Group</T></Cell>
        <Cell $w={113.6} $fill $line={ACCENT}><T w={89}>North America</T><FilterButton><FilterMark /></FilterButton></Cell>
        <BlankCells from={5} />
      </GridRow>
      <GridRow>
        <RowHead $on={false}>2</RowHead>
        {COLS.slice(0, 4).map(([c, w]) => <Cell key={c} $w={w} $edge />)}
        <BlankCells from={4} />
      </GridRow>
      <GridRow>
        <RowHead $on={false}>3</RowHead>
        <Cell $w={257} $fill $bold $line={ACCENT}>
          <T w={68}>Row Labels</T>
          <FilterButton>{filtered ? <FilterMark /> : <Down w={7} color="#444" />}</FilterButton>
        </Cell>
        <Cell $w={140} $fill $bold $line={ACCENT}><T w={130.6}>Sum of Sales Amount</T></Cell>
        <Cell $w={199} $fill $bold $line={ACCENT}><T w={188}>Sum of Sales Discount Amount</T></Cell>
        <Cell $w={235} $fill $bold $line={ACCENT}><T w={176.4}>Sum of Sales Return Amount</T></Cell>
        <BlankCells from={4} />
      </GridRow>
      {rows.map(([level, label, ...values], i) => {
        const line = level === 0 ? ACCENT : undefined;
        const picked = i === 10;
        return (
          <GridRow key={i}>
            <RowHead $on={picked}>{i + 4}</RowHead>
            <Cell $w={257} $line={line} $bold={level < 2} $pad={[4.3, 17.3, 41][level]}>
              {level < 2 && <Expander />}
              <T w={LABEL_W[label]}>{label}</T>
              {picked && <Selection />}
            </Cell>
            {values.map((v, k) => (
              <Cell key={k} $w={COLS[k + 1][1]} $num $line={line} $bold={level < 2} $edge={k === 2}>
                <T w={numberWidth(v)}>{v}</T>
              </Cell>
            ))}
            <BlankCells from={4} />
          </GridRow>
        );
      })}
    </SheetBox>
  );
}

function SheetTail() {
  return (
    <SheetBox>
      <HeadRow>
        <HeadCell $w={35} $side="left">J</HeadCell>
        <HeadCell $w={37.4} $side="right">K</HeadCell>
      </HeadRow>
      {Array.from({ length: 32 }, (_, i) => (
        <GridRow key={i}><Cell $w={35} $line={LINE} $edge /><Cell $w={37.4} $line={LINE} /></GridRow>
      ))}
    </SheetBox>
  );
}

/* ---------- scrollbars and sheet tabs ---------- */
const VScroll = styled.div`
  display: flex;
  flex-direction: column;
  flex: none;
  width: ${r(14.6)};
  margin: ${r(2.6)} ${r(3.4)} 0 ${r(2.8)};
  background: #dadada;
`;
const ScrollKey = styled.div`
  display: flex;
  align-items: center;
  justify-content: center;
  flex: none;
  width: ${r(14.6)};
  height: ${r(14.4)};
  background: #fff;
  border: 1px solid #ababab;
`;
const VThumb = styled.div`
  flex: none;
  height: ${r(38)};
  background: #fff;
  border: 1px solid #ababab;
  margin-bottom: auto;
`;
const Arrow = ({ dir }: { dir: "up" | "down" | "left" | "right" }) => (
  <Icon w={8} h={8}>
    <path stroke="none" fill="#666" d={{ up: "M0 6H8L4 2Z", down: "M0 2H8L4 6Z", left: "M6 0V8L2 4Z", right: "M2 0V8L6 4Z" }[dir]} />
  </Icon>
);
const VerticalScroll = () => (
  <VScroll>
    <ScrollKey><Arrow dir="up" /></ScrollKey>
    <VThumb />
    <ScrollKey><Arrow dir="down" /></ScrollKey>
  </VScroll>
);
const SheetTabs = styled.div`
  display: flex;
  height: ${r(27.4)};
  background: ${CHROME};
`;
const NavArrows = styled.div`
  display: flex;
  justify-content: space-between;
  align-items: center;
  width: ${r(99.5)};
  height: ${r(25)};
  padding: 0 ${r(39)} 0 ${r(23)};
  opacity: 0.35;
`;
const SheetTab = styled.div<{ $w: number; $on?: boolean }>`
  display: flex;
  justify-content: center;
  align-items: center;
  width: ${(p) => r(p.$w)};
  height: ${r(25)};
  font-size: ${r(12.3)};
  border-left: 1px solid ${(p) => (p.$on ? "#9b9b9b" : "transparent")};
  border-right: 1px solid #9b9b9b;
  ${(p) => p.$on && css`background: #fff; color: ${GREEN}; font-weight: 700; margin-top: -1px; height: ${r(26)}; border-bottom: ${r(2.6)} solid ${GREEN};`}
`;
const AddSheet = styled.div`
  margin: ${r(5)} 0 0 ${r(34)};
`;
const TabDots = styled.div`
  margin: ${r(8)} 0 0 ${r(386)};
`;
const HScroll = styled.div<{ $w: number; $lead: number }>`
  display: flex;
  width: ${(p) => r(p.$w)};
  height: ${r(14.4)};
  margin: ${r(7)} 0 0 ${(p) => r(p.$lead)};
  background: #dadada;
`;
const HThumb = styled.div`
  width: ${r(503)};
  background: #fff;
  border: 1px solid #ababab;
`;
const Spring = styled.div`
  flex: 1;
`;
const TabStrip = () => (
  <SheetTabs>
    <NavArrows><Arrow dir="left" /><Arrow dir="right" /></NavArrows>
    <Divider $h={23} $top={2} />
    <SheetTab $w={103}><T w={73.6}>ControlPanel</T></SheetTab>
    <SheetTab $w={196.5} $on><T w={171}>SalesReportFormMDXQuery</T></SheetTab>
    <SheetTab $w={104}><T w={76}>QueryResult1</T></SheetTab>
    <AddSheet><Icon w={16} h={16} color="#777"><circle cx="8" cy="8" r="7.4" /><path d="M4 8H12M8 4V12" strokeWidth="1.8" stroke="#555" /></Icon></AddSheet>
    <TabDots><Grip /></TabDots>
    <HScroll $w={590} $lead={15.5}>
      <ScrollKey><Arrow dir="left" /></ScrollKey><HThumb /><Spring /><ScrollKey><Arrow dir="right" /></ScrollKey>
    </HScroll>
  </SheetTabs>
);

/* ---------- PivotTable pane ---------- */
const PaneBox = styled.aside`
  flex: none;
  width: ${r(349)};
  height: ${r(677.4)};
  margin-top: ${r(2.6)};
  padding-left: ${r(11.6)};
  border-left: 1px solid #bdbdbd;
  background: ${CHROME};
`;
const PaneTitle = styled.div`
  display: flex;
  align-items: center;
  height: ${r(44.4)};
  width: ${r(322.6)};
  font-size: ${r(22)};
  font-weight: 300;
  color: #1e6b41;
  padding: ${r(3)} 0 0 ${r(1.5)};
`;
const PaneTitleTools = styled.div`
  display: flex;
  align-items: center;
  gap: ${r(31)};
  margin: 0 ${r(5)} ${r(7)} auto;
`;
const ChooseRow = styled.div`
  display: flex;
  align-items: center;
  justify-content: space-between;
  width: ${r(322.6)};
  height: ${r(27)};
  padding-left: ${r(1.5)};
`;
const GearButton = styled.div`
  display: flex;
  align-items: center;
  justify-content: center;
  gap: ${r(7)};
  width: ${r(43.7)};
  height: ${r(27)};
  background: #fff;
  border: 1px solid #ababab;
`;
const PaneSearch = styled.div`
  display: flex;
  align-items: center;
  justify-content: space-between;
  width: ${r(322.6)};
  height: ${r(20.4)};
  margin-top: ${r(13)};
  padding-left: ${r(1)};
  line-height: ${r(16)};
  background: #fff;
  border: 1px solid #ababab;
  color: #666;
`;
const FieldList = styled.div`
  width: ${r(322.6)};
  height: ${r(218)};
  margin-top: ${r(15.6)};
  background: #fdfdfd;
`;
const FieldRow = styled.div<{ $on?: boolean }>`
  display: flex;
  align-items: center;
  height: ${r(19)};
  padding-left: ${r(1.8)};
  padding-bottom: ${r(2.4)};
  font-weight: 700;
  font-size: ${r(11.6)};
  background: ${(p) => (p.$on ? "#9fd5b7" : "transparent")};
`;
const CheckBox = styled.span<{ $dim?: boolean }>`
  display: flex;
  align-items: center;
  justify-content: center;
  width: ${r(13)};
  height: ${r(13)};
  margin-right: ${r(6)};
  border: 1px solid #777;
  background: ${(p) => (p.$dim ? "#c4c4c4" : "#fff")};
`;
const RowEnd = styled.span<{ $pad: number }>`
  margin-left: auto;
  padding-right: ${(p) => r(p.$pad)};
`;
const MoreTables = styled.div`
  padding: ${r(6)} 0 0 ${r(2.4)};
`;
const DotLine = styled.div`
  width: ${r(325)};
  margin: ${r(16)} 0 0 ${r(2)};
  border-top: 1px dotted #b5b5b5;
`;
const DragLabel = styled.div`
  height: ${r(36)};
  padding-left: ${r(4.3)};
  line-height: ${r(24)};
`;
const Areas = styled.div`
  display: grid;
  grid-template-columns: ${r(159.6)} ${r(161)};
  margin-left: ${r(3)};
`;
const Area = styled.div<{ $left?: boolean; $top?: boolean }>`
  padding: ${(p) => (p.$top ? "0" : r(5))} 0 ${(p) => (p.$top ? r(6.5) : "0")} ${(p) => (p.$left ? "0" : r(2.5))};
  border-right: ${(p) => (p.$left ? "1px solid #bdbdbd" : "0")};
  border-bottom: ${(p) => (p.$top ? "1px solid #bdbdbd" : "0")};
`;
const AreaHead = styled.div`
  display: grid;
  grid-template-columns: ${r(19.5)} auto;
  justify-content: start;
  align-items: center;
  height: ${r(20)};
  padding: 0 0 ${r(3)} ${r(4)};
`;
const AreaBox = styled.div<{ $w: number }>`
  display: flex;
  flex-direction: column;
  gap: ${r(2)};
  width: ${(p) => r(p.$w)};
  height: ${r(91.5)};
  padding: ${r(1.7)} ${r(1)};
  background: #fdfdfd;
`;
const Chip = styled.div`
  display: flex;
  align-items: center;
  gap: ${r(7)};
  height: ${r(19)};
  padding: 0 ${r(9)} 0 ${r(6)};
  line-height: ${r(16)};
  background: #fff;
  border: 1px solid #ababab;
  white-space: nowrap;
`;
const ChipEnd = styled.span`
  margin-left: auto;
`;
const PaneFoot = styled.div`
  display: flex;
  align-items: center;
  width: ${r(320)};
  height: ${r(22.3)};
  margin: ${r(19.5)} 0 0 ${r(3)};
`;
const UpdateButton = styled.div`
  display: flex;
  align-items: center;
  justify-content: center;
  width: ${r(47)};
  height: ${r(22.3)};
  margin-left: auto;
  background: #fdfdfd;
  border: 1px solid #dcdcdc;
  color: #b1b1b1;
`;
const FIELDS: [string, number][] = [
  ["Channel.Channel Name", 127], ["Date.Calendar Year", 105.7], ["Product.Product Category Name", 179.7],
  ["Product.Product Subcategory Name", 200], ["Sales Territory.Sales Territory Group", 203],
  ["Sales Amount", 76], ["Sales Discount Amount", 128], ["Sales Return Amount", 118],
];
const ChipItem = ({ text, w, sigma }: { text: string; w: number; sigma?: boolean }) => (
  <Chip>
    {sigma && <SigmaIcon w={10} h={12} />}
    <T w={w}>{text}</T>
    <ChipEnd><Down w={7} /></ChipEnd>
  </Chip>
);

function FieldsPane({ hover, funnels }: { hover?: boolean; funnels: number[] }) {
  return (
    <PaneBox>
      <PaneTitle>
        <T w={153}>PivotTable Fields</T>
        <PaneTitleTools><Down w={10} /><CrossIcon s={9} color="#666" /></PaneTitleTools>
      </PaneTitle>
      <ChooseRow>
        <T w={159}>Choose fields to add to report:</T>
        <GearButton><GearIcon /><Down w={7} /></GearButton>
      </ChooseRow>
      <PaneSearch><T w={34.3}>Search</T><LensIcon /></PaneSearch>
      <FieldList>
        {FIELDS.map(([name, w], i) => (
          <FieldRow key={name} $on={hover && i === 0}>
            <CheckBox $dim={hover && i === 0}><CheckIcon color={hover && i === 0 ? "#888" : undefined} /></CheckBox>
            <T w={w}>{name}</T>
            {hover && i === 0 && <RowEnd $pad={14}><Down w={8} color="#1e4d33" /></RowEnd>}
            {funnels.includes(i) && <RowEnd $pad={3}><FunnelIcon /></RowEnd>}
          </FieldRow>
        ))}
        <MoreTables><T w={73.7}>More Tables...</T></MoreTables>
      </FieldList>
      <DotLine />
      <DragLabel><T w={171}>Drag fields between areas below:</T></DragLabel>
      <Areas>
        <Area $left $top>
          <AreaHead><FunnelIcon solid /><T w={30.7}>Filters</T></AreaHead>
          <AreaBox $w={153}><ChipItem text="Date.Calendar Year" w={99.7} /><ChipItem text="Sales Territory.Sales T..." w={121.7} /></AreaBox>
        </Area>
        <Area $top>
          <AreaHead>
            <Icon w={10} h={10}><path d="M1.5 0V10M4.5 0V10M7 0V10M9.5 0V10" stroke="#9a9a9a" /><path d="M1.5 0V10" stroke="#9a9a9a" strokeWidth="3" /></Icon>
            <T w={47.7}>Columns</T>
          </AreaHead>
          <AreaBox $w={158}><ChipItem text="Values" w={33.7} sigma /></AreaBox>
        </Area>
        <Area $left>
          <AreaHead>
            <Icon w={10} h={9}><path d="M0 1.5H10" stroke="#9a9a9a" strokeWidth="3" /><path d="M0 4.5H10M0 6.7H10M0 8.8H10" stroke="#9a9a9a" /></Icon>
            <T w={27.7}>Rows</T>
          </AreaHead>
          <AreaBox $w={153}>
            <ChipItem text="Product.Product Cate..." w={123} /><ChipItem text="Product.Product Sub..." w={118.7} /><ChipItem text="Channel.Channel Na..." w={118} />
          </AreaBox>
        </Area>
        <Area>
          <AreaHead><SigmaIcon w={9} h={9} color="#8a8a8a" /><T w={34}>Values</T></AreaHead>
          <AreaBox $w={158}>
            <ChipItem text="Sum of Sales Amount" w={114} /><ChipItem text="Sum of Sales Discount..." w={126} /><ChipItem text="Sum of Sales Return A..." w={125} />
          </AreaBox>
        </Area>
      </Areas>
      <PaneFoot>
        <CheckBox />
        <T w={107}>Defer Layout Update</T>
        <UpdateButton><T w={37.3}>Update</T></UpdateButton>
      </PaneFoot>
    </PaneBox>
  );
}

/* ---------- status bar ---------- */
const StatusBar = styled.div<{ $lead: number }>`
  display: flex;
  align-items: stretch;
  height: ${r(22)};
  padding-left: ${(p) => r(p.$lead)};
  background: ${PANEL};
  border-top: 1px solid #c6c6c6;
`;
const StatusRecord = styled.div`
  display: flex;
  align-items: center;
  width: ${r(1494)};
`;
const StatusCell = styled.div<{ $w: number; $on?: boolean }>`
  display: flex;
  flex: none;
  align-items: center;
  justify-content: center;
  gap: ${r(4)};
  width: ${(p) => r(p.$w)};
  background: ${(p) => (p.$on ? "#c8c6c4" : "transparent")};
`;
const StatusText = styled(StatusCell)`
  justify-content: flex-start;
`;
const StatusRight = () => (
  <>
    <StatusText $w={118}>
      <Icon w={14} h={12}><path d="M5 8.5H0.5V0.5H13.5V4M2 11H6" /><circle cx="10" cy="8.5" r="2.5" /><circle cx="10" cy="8.5" r="3.6" strokeDasharray="1.5 1.3" /></Icon>
      <T w={81}>Display Settings</T>
    </StatusText>
    <StatusCell $w={40} $on><Icon w={13} h={12}><path d="M0.5 0.5H12.5V11.5H0.5ZM0.5 4H12.5M0.5 8H12.5M4.5 0.5V11.5M8.5 0.5V11.5" /></Icon></StatusCell>
    <StatusCell $w={40}><Icon w={14} h={12}><path d="M0.5 0.5H13.5V11.5H0.5ZM3.5 2.5H10.5V9.5H3.5ZM5 4.5H9M5 6H9M5 7.5H9" /></Icon></StatusCell>
    <StatusCell $w={40}><Icon w={14} h={12}><path d="M0.5 0.5H13.5V11.5H0.5ZM4.5 0.5V7.5H9.5V0.5M0.5 7.5H4" /></Icon></StatusCell>
    <StatusCell $w={20}><Icon w={8} h={2}><path d="M0 1H8" /></Icon></StatusCell>
    <StatusCell $w={100}>
      <Icon w={100} h={11}><path d="M0 5.5H100" stroke="#9b9b9b" /><rect x="47.5" y="0" width="5.5" height="11" fill="#666" stroke="none" /></Icon>
    </StatusCell>
    <StatusCell $w={18}><Icon w={8} h={8}><path d="M0 4H8M4 0V8" /></Icon></StatusCell>
    <StatusCell $w={44}><T w={26}>100%</T></StatusCell>
  </>
);

/* ---------- windows ---------- */
const Frame = styled.section<{ $w: number; $h: number; $top: number; $lead: number }>`
  position: relative;
  flex: none;
  width: ${(p) => r(p.$w)};
  height: ${(p) => r(p.$h)};
  margin: ${(p) => r(p.$top)} 0 0 ${(p) => r(p.$lead)};
  overflow: hidden;
  background: ${CHROME};
`;
const Shell = styled.div<{ $shift: number }>`
  width: ${r(1919)};
  margin-left: ${(p) => r(-p.$shift)};
`;
const Workspace = styled.div`
  display: flex;
`;
const SheetSide = styled.div<{ $w: number }>`
  width: ${(p) => r(p.$w)};
  flex: none;
`;
const SheetArea = styled.div`
  display: flex;
`;
const Taskbar = styled.div`
  height: ${r(8)};
  background: #02060c;
  overflow: hidden;
  display: flex;
`;
const TaskItem = styled.div`
  width: ${r(48)};
  margin-left: ${r(244)};
  background: #303336;
`;

function ExcelWindow(p: { titled: boolean; shift: number; value: string; valueW: number; rows: DataRow[]; funnels: number[] }) {
  return (
    <Shell $shift={p.shift}>
      {p.titled && <TitleStrip />}
      <Ribbon cut={!p.titled} />
      <FormulaBar>
        <FieldBox $w={101.6}><T w={24}>A14</T><Down w={7} /></FieldBox>
        <GripSlot $w={30}><Grip /></GripSlot>
        <FxBox $w={110}>
          <CrossIcon s={11} color="#c4c4c4" />
          <Icon w={13} h={10} color="#c4c4c4"><path d="M0.5 5L4.5 9L12 0.5" strokeWidth="2" /></Icon>
          <FxMark>f<Small>x</Small></FxMark>
        </FxBox>
        <InputBox $lead={4}><T w={p.valueW}>{p.value}</T><Icon w={8} h={6}><path d="M1 1L4 4.5L7 1" strokeWidth="1.7" /></Icon></InputBox>
      </FormulaBar>
      <Workspace>
        <SheetSide $w={1569.3}>
          <SheetArea><Sheet rows={p.rows} filtered={p.funnels.includes(0)} /><VerticalScroll /></SheetArea>
          <TabStrip />
        </SheetSide>
        <FieldsPane funnels={p.funnels} />
      </Workspace>
      <StatusBar $lead={7}>
        <StatusRecord>
          <Icon w={14} h={12}><path d="M6 11.5H0.5V0.5H12.5V4M0.5 3H12.5M2.5 5.5H5M2.5 8H5" /><circle cx="9.5" cy="8" r="3.5" /><circle cx="9.5" cy="8" r="1.5" fill={INK} /></Icon>
        </StatusRecord>
        <StatusRight />
      </StatusBar>
      {p.titled && <Taskbar><TaskItem /></Taskbar>}
    </Shell>
  );
}

/* left window: only its right-hand part is in view */
const TailShell = styled.div`
  padding-top: ${r(8.4)};
`;

/* ---------- filter menu ---------- */
const Menu = styled.div`
  position: absolute;
  left: ${r(1293.6)};
  top: ${r(313.3)};
  width: ${r(287)};
  height: ${r(416)};
  background: #fff;
  border: 1px solid #c6c6c6;
  color: #222;
  z-index: 3;
`;
const MenuRow = styled.div<{ $h: number; $dim?: boolean; $pad?: number }>`
  display: flex;
  align-items: center;
  height: ${(p) => r(p.$h)};
  padding-left: ${(p) => r(p.$pad ?? 12)};
  color: ${(p) => (p.$dim ? "#a6a6a6" : "#222")};
  white-space: nowrap;
`;
const MenuIcon = styled.span`
  width: ${r(25)};
`;
const MenuRule = styled.div`
  margin-left: ${r(32)};
  border-top: 1px solid #dcdcdc;
`;
const MenuArrow = styled.span`
  margin: 0 ${r(7)} 0 auto;
`;
const MenuSearch = styled.div`
  display: flex;
  align-items: center;
  justify-content: space-between;
  width: ${r(250)};
  height: ${r(20)};
  margin: ${r(6)} 0 ${r(3.5)} ${r(30)};
  padding-left: ${r(2)};
  line-height: ${r(16)};
  border: 1px solid #999;
  color: #666;
`;
const Tree = styled.div`
  width: ${r(250)};
  height: ${r(168)};
  margin-left: ${r(30)};
  padding: 0 0 0 ${r(13)};
  border: 1px solid #e1e1e1;
`;
const Branch = styled.div`
  display: flex;
  align-items: center;
  height: ${r(18.1)};
`;
const Twig = styled.span`
  width: ${r(9)};
  height: ${r(18.1)};
  margin-right: ${r(1)};
  border-left: 1px dotted #999;
  background: repeating-linear-gradient(90deg, #999 0 1px, transparent 1px 2px) 0 55% / 100% 1px no-repeat;
`;
const TreeCheck = styled.span<{ $full?: boolean }>`
  display: flex;
  align-items: center;
  justify-content: center;
  width: ${r(11)};
  height: ${r(11)};
  border: 1px solid #555;
  background: #fff;
  ${(p) => p.$full && css`&::after { content: ""; width: ${r(6)}; height: ${r(6)}; background: #000; }`}
`;
const TreeLabel = styled.span<{ $on?: boolean }>`
  padding: 0 ${r(1)} 0 ${r(3)};
  line-height: ${r(17)};
  background: ${(p) => (p.$on ? "#f0f0f0" : "transparent")};
`;
const MenuButtons = styled.div`
  display: flex;
  justify-content: flex-end;
  gap: ${r(11)};
  padding: ${r(15.5)} ${r(6)} ${r(5)} 0;
`;
const MenuButton = styled.div<{ $main?: boolean }>`
  display: flex;
  align-items: center;
  justify-content: center;
  width: ${r(73.5)};
  height: ${r(21)};
  background: ${(p) => (p.$main ? "#e5f1fb" : "#e1e1e1")};
  border: ${(p) => (p.$main ? "1.5px solid #0078d7" : "1px solid #adadad")};
`;
const MenuGrip = styled.div`
  display: flex;
  justify-content: flex-end;
  align-items: flex-end;
  height: ${r(10)};
  padding: 0 ${r(3)} ${r(2)} 0;
  border-top: 1px solid #dce4ee;
  background: linear-gradient(#fff, #f0f0f0);
`;
const BRANCHES: [string, number, string][] = [
  ["(Select All)", 55, "full"], ["Catalog", 41, ""], ["Online", 35, "yes"], ["Reseller", 40, "yes"], ["Store", 27, ""], ["(blank)", 36, ""],
];
const SortIcon = ({ a, b }: { a: string; b: string }) => (
  <Icon w={17} h={17}>
    <text x="0" y="7" fontSize="9" fontWeight="700" fill={a === "A" ? BLUE : INK} stroke="none">{a}</text>
    <text x="0" y="16" fontSize="9" fontWeight="700" fill={b === "A" ? BLUE : INK} stroke="none">{b}</text>
    <path d="M12.5 0V15.5M9.5 12.5L12.5 15.5L15.5 12.5" />
  </Icon>
);
const Chevron = () => <Icon w={6} h={9}><path d="M0.7 0.5L5 4.5L0.7 8.5" strokeWidth="1.2" /></Icon>;

const FilterMenu = () => (
  <Menu>
    <MenuRow $h={29}><MenuIcon><SortIcon a="A" b="Z" /></MenuIcon><T w={56}><u>S</u>ort A to Z</T></MenuRow>
    <MenuRow $h={28}><MenuIcon><SortIcon a="Z" b="A" /></MenuIcon><T w={56}>S<u>o</u>rt Z to A</T></MenuRow>
    <MenuRow $h={28.5}><MenuIcon /><T w={106}><u>M</u>ore Sort Options...</T></MenuRow>
    <MenuRule />
    <MenuRow $h={29} $dim>
      <MenuIcon><Icon w={17} h={16} color="#b0b0b0"><path d="M0.7 0.5H15.5L10 6.5M0.7 0.5L6 7V15L8 13.5M10 9.5L16 15.5M16 9.5L10 15.5" strokeWidth="1.2" /></Icon></MenuIcon>
      <T w={225.8}><u>C</u>lear Filter From "Channel.Channel Name"</T>
    </MenuRow>
    <MenuRow $h={24.5} $pad={29.3}><T w={62}><u>L</u>abel Filters</T><MenuArrow><Chevron /></MenuArrow></MenuRow>
    <MenuRow $h={24.5} $pad={29.3}><T w={62.5}><u>V</u>alue Filters</T><MenuArrow><Chevron /></MenuArrow></MenuRow>
    <MenuRule />
    <MenuSearch><T w={35}>Search</T><LensIcon /></MenuSearch>
    <Tree>
      {BRANCHES.map(([name, w, state], i) => (
        <Branch key={name}>
          <Twig />
          <TreeCheck $full={state === "full"}>{state === "yes" && <CheckIcon color="#000" sw={2} />}</TreeCheck>
          <TreeLabel $on={i === 1}><T w={w}>{name}</T></TreeLabel>
        </Branch>
      ))}
    </Tree>
    <MenuButtons>
      <MenuButton $main><T w={15}>OK</T></MenuButton>
      <MenuButton><T w={33}>Cancel</T></MenuButton>
    </MenuButtons>
    <MenuGrip><Icon w={7} h={6}><path d="M5 1H7M2 5H4M5 5H7" stroke="#aaa" strokeWidth="2" /></Icon></MenuGrip>
  </Menu>
);

/* ---------- annotations drawn over the board ---------- */
const Board = styled.main`
  position: relative;
  display: flex;
  align-items: flex-start;
  width: ${r(5192)};
  height: ${r(1144.6)};
  overflow: hidden;
  background: #fff;
`;
const Note = styled.div<{ $x: number; $y: number }>`
  position: absolute;
  left: ${(p) => r(p.$x)};
  top: ${(p) => r(p.$y)};
  line-height: ${r(30)};
  font-size: ${r(21.8)};
  color: ${RED};
  z-index: 4;
`;
const Marker = styled.div<{ $x: number; $y: number; $w: number; $h: number }>`
  position: absolute;
  left: ${(p) => r(p.$x)};
  top: ${(p) => r(p.$y)};
  width: ${(p) => r(p.$w)};
  height: ${(p) => r(p.$h)};
  border: ${r(5.1)} solid ${RED};
  z-index: 4;
`;
const ArrowSpot = styled.div<{ $x: number; $y: number }>`
  position: absolute;
  left: ${(p) => r(p.$x)};
  top: ${(p) => r(p.$y)};
`;
const BlockArrow = ({ x, y }: { x: number; y: number }) => (
  <ArrowSpot $x={x} $y={y}>
    <Icon w={156} h={75} color={RED}>
      <path d="M2.5 19.5H78V2.5L153 37.5L78 72V54.5H2.5Z" strokeWidth="5" strokeLinejoin="round" />
    </Icon>
  </ArrowSpot>
);

export default function App() {
  return (
    <>
      <GlobalStyle />
      <Board>
        <BlockArrow x={920} y={511} />
        <BlockArrow x={3079.5} y={576.5} />
        <Frame $w={443} $h={717} $top={152} $lead={315}>
          <TailShell>
            <Workspace>
              <SheetSide $w={93.4}>
                <SheetArea><SheetTail /><VerticalScroll /></SheetArea>
                <SheetTabs>
                  <HScroll $w={72.4} $lead={0}><Spring /><ScrollKey><Arrow dir="right" /></ScrollKey></HScroll>
                </SheetTabs>
              </SheetSide>
              <FieldsPane hover funnels={[1, 4]} />
            </Workspace>
            <StatusBar $lead={25}><StatusRight /></StatusBar>
            <Taskbar />
          </TailShell>
        </Frame>
        <Frame $w={1917} $h={873} $top={50} $lead={358.3}>
          <ExcelWindow titled={false} shift={2} value="Store" valueW={32} rows={BEFORE} funnels={[1, 4]} />
          <FilterMenu />
        </Frame>
        <Frame $w={1917} $h={917} $top={40} $lead={194.7}>
          <ExcelWindow titled shift={0} value="Cameras and camcorders" valueW={153} rows={AFTER} funnels={[0, 1, 4]} />
        </Frame>
        <Note $x={284.6} $y={119.7}><T w={709}>Now please click the Icon "Channel.Channel Name" of the red-marked area !</T></Note>
        <Note $x={2054} $y={307.7}><T w={773}>1.Now please only keep the following checkbox's checked in the red-marked area !</T></Note>
        <Note $x={2094} $y={780}><T w={370}>2. Finally click the Dialog's Button "OK" !</T></Note>
        <Marker $x={410.2} $y={275.2} $w={227} $h={31} />
        <Marker $x={2443.7} $y={592} $w={96.3} $h={44} />
        <Marker $x={2519} $y={727} $w={96.3} $h={50} />
      </Board>
    </>
  );
}
